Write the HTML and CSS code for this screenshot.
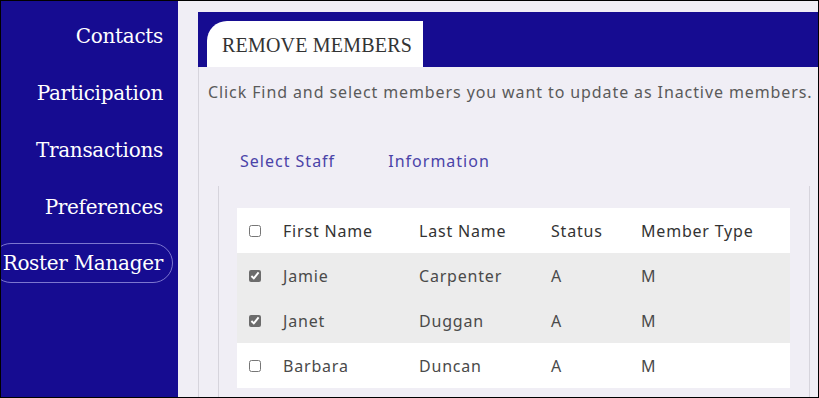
FILE: index.html
```html
<!DOCTYPE html>
<html lang="en">

<head>
    <meta charset="UTF-8">
    <title>Roster Manager</title>
    <link rel="stylesheet" href="styles.css">
</head>

<body>
    <div class="frame">
        <ul class="sidenav">
            <li>Contacts</li>
            <li>Participation</li>
            <li>Transactions</li>
            <li>Preferences</li>
            <li class="current">Roster Manager</li>
        </ul>

        <div class="main">
            <div class="headbar">
                <div class="tab">REMOVE MEMBERS</div>
            </div>
            <div class="panel">
                <p class="intro">Click Find and select members you want to update as Inactive members.</p>
                <div class="links">
                    <a>Select Staff</a>
                    <a>Information</a>
                </div>
                <div class="inner">
                    <table class="members">
                        <tr class="head">
                            <td class="chk"><input type="checkbox"></td>
                            <td class="c1">First Name</td>
                            <td class="c2">Last Name</td>
                            <td class="c3">Status</td>
                            <td>Member Type</td>
                        </tr>
                        <tr class="picked">
                            <td class="chk"><input type="checkbox" checked></td>
                            <td>Jamie</td>
                            <td>Carpenter</td>
                            <td>A</td>
                            <td>M</td>
                        </tr>
                        <tr class="picked">
                            <td class="chk"><input type="checkbox" checked></td>
                            <td>Janet</td>
                            <td>Duggan</td>
                            <td>A</td>
                            <td>M</td>
                        </tr>
                        <tr>
                            <td class="chk"><input type="checkbox"></td>
                            <td>Barbara</td>
                            <td>Duncan</td>
                            <td>A</td>
                            <td>M</td>
                        </tr>
                    </table>
                </div>
            </div>
        </div>
    </div>
</body>

</html>
```

FILE: styles.css
```css
* {
    margin: 0;
    padding: 0;
    list-style: none;
    box-sizing: border-box;
}

body {
    font-family: "Noto Sans", sans-serif;
    background: #f0eef5;
}

.frame {
    display: flex;
    width: 819px;
    height: 398px;
    border: 1px solid #000;
    overflow: hidden;
    background: #f0eef5;
}

.sidenav {
    flex: 0 0 177px;
    background: #160c91;
    padding-top: 18px;
}

.sidenav>li {
    height: 57px;
    padding-right: 15px;
    text-align: right;
    color: #fff;
    font-family: "DejaVu Serif", serif;
    font-size: 20px;
    line-height: 34px;
    letter-spacing: -0.3px;
}

.sidenav>li.current {
    margin-top: -4px;
    margin-left: -10px;
    margin-right: 5px;
    height: 40px;
    line-height: 38px;
    padding-right: 9px;
    border: 1px solid #7c76cf;
    border-radius: 20px;
}

.main {
    flex: 1;
    padding-left: 20px;
    padding-top: 11px;
}

.headbar {
    height: 55px;
    background: #160c91;
    padding: 9px 0 0 9px;
}

.tab {
    display: inline-block;
    height: 46px;
    padding: 0 11px 0 15px;
    background: #fff;
    border-top-left-radius: 20px;
    font-family: "Liberation Serif", serif;
    font-size: 20px;
    letter-spacing: 0.2px;
    line-height: 48px;
    color: #333;
}

.panel {
    height: 330px;
    border-left: 1px solid #d6d4dc;
    padding: 13px 0 0 9px;
}

.intro {
    font-size: 16px;
    line-height: 24px;
    letter-spacing: 0.9px;
    color: #5a5a5a;
    white-space: nowrap;
}

.links {
    padding: 45px 0 0 32px;
    height: 82px;
}

.links>a {
    font-size: 16px;
    line-height: 24px;
    letter-spacing: 1px;
    color: #4a43a8;
    margin-right: 49px;
}

.inner {
    margin-left: 10px;
    width: 592px;
    height: 220px;
    border-left: 1px solid #d6d4dc;
    border-right: 1px solid #d6d4dc;
    padding: 22px 18px 0 18px;
}

.members {
    width: 553px;
    border-collapse: collapse;
    background: #fff;
    font-size: 16px;
    letter-spacing: 0.8px;
    color: #4a4a4a;
}

.members td {
    height: 45px;
    padding: 0;
    text-align: left;
}

.members .head td {
    color: #333;
}

.members .picked {
    background: #ececec;
}

.members .chk {
    width: 46px;
    padding-left: 12px;
}

.members .c1 {
    width: 136px;
}

.members .c2 {
    width: 132px;
}

.members .c3 {
    width: 90px;
}

.members input {
    display: block;
    width: 12px;
    height: 12px;
    margin: 0;
    accent-color: #6c6c6c;
}
```
